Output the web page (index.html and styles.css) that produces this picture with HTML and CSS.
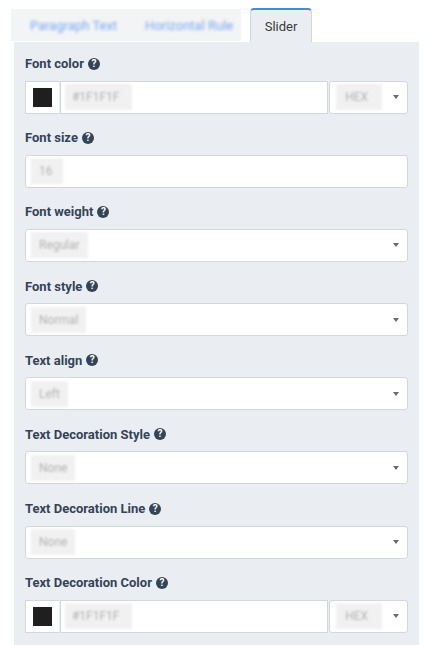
FILE: index.html
```html
<!DOCTYPE html>
<html>
<head>
<meta charset="utf-8">
<link rel="stylesheet" href="styles.css">
</head>
<body>
<div class="tabs">
  <div class="tab-group">
    <span class="tab-link">Paragraph Text</span>
    <span class="tab-link">Horizontal Rule</span>
  </div>
  <div class="tab-active">Slider</div>
</div>
<div class="panel">
  <div class="field">
    <div class="label">Font color <span class="q">?</span></div>
    <div class="color-row">
      <div class="swatch-cell"><span class="swatch"></span></div>
      <div class="text-input"><span class="ph ph-hex">#1F1F1F</span></div>
      <div class="select mode"><span class="ph ph-mode">HEX</span><span class="caret"></span></div>
    </div>
  </div>
  <div class="field">
    <div class="label">Font size <span class="q">?</span></div>
    <div class="input"><span class="ph ph-num">16</span></div>
  </div>
  <div class="field">
    <div class="label">Font weight <span class="q">?</span></div>
    <div class="select"><span class="ph">Regular</span><span class="caret"></span></div>
  </div>
  <div class="field">
    <div class="label">Font style <span class="q">?</span></div>
    <div class="select"><span class="ph">Normal</span><span class="caret"></span></div>
  </div>
  <div class="field">
    <div class="label">Text align <span class="q">?</span></div>
    <div class="select"><span class="ph">Left</span><span class="caret"></span></div>
  </div>
  <div class="field">
    <div class="label">Text Decoration Style <span class="q">?</span></div>
    <div class="select"><span class="ph">None</span><span class="caret"></span></div>
  </div>
  <div class="field">
    <div class="label">Text Decoration Line <span class="q">?</span></div>
    <div class="select"><span class="ph">None</span><span class="caret"></span></div>
  </div>
  <div class="field">
    <div class="label">Text Decoration Color <span class="q">?</span></div>
    <div class="color-row">
      <div class="swatch-cell"><span class="swatch"></span></div>
      <div class="text-input"><span class="ph ph-hex">#1F1F1F</span></div>
      <div class="select mode"><span class="ph ph-mode">HEX</span><span class="caret"></span></div>
    </div>
  </div>
</div>
</body>
</html>
```
FILE: styles.css
```css
* { box-sizing: border-box; }
html, body { margin: 0; padding: 0; background: #ffffff; }
body {
  font-family: Roboto, "Liberation Sans", Arial, sans-serif;
  font-size: 13px;
  color: #333;
  height: 645px;
  overflow: hidden;
}
.tabs {
  display: flex;
  align-items: flex-end;
  padding: 8px 0 0 11px;
}
.tab-group {
  display: flex;
  align-items: center;
  width: 230px;
  height: 32px;
  margin-bottom: 1px;
  background: #f3f4f5;
  padding-left: 19px;
  gap: 28px;
  overflow: hidden;
}
.tab-link {
  color: #7ba8ef;
  filter: blur(1.4px);
  font-size: 13px;
  white-space: nowrap;
}
.tab-active {
  margin-left: 9px;
  width: 62px;
  height: 34px;
  background: #eaeef3;
  border-top: 2px solid #3d8fd9;
  border-left: 1px solid #d3d8df;
  border-right: 1px solid #d3d8df;
  border-radius: 4px 4px 0 0;
  display: flex;
  align-items: center;
  justify-content: center;
  color: #3a3a3a;
  font-size: 13px;
}
.panel {
  margin-left: 14px;
  width: 405px;
  min-height: 610px;
  background: #eaeef3;
  padding: 12.5px 11px 0;
}
.field { margin-bottom: 15.2px; }
.label {
  display: flex;
  align-items: center;
  height: 18px;
  margin-bottom: 8px;
  font-weight: 700;
  font-size: 13px;
  color: #354357;
  gap: 4px;
}
.q {
  display: inline-flex;
  align-items: center;
  justify-content: center;
  width: 12px;
  height: 12px;
  border-radius: 50%;
  background: #354357;
  color: #fff;
  font-size: 10px;
  font-weight: 700;
  line-height: 1;
}
.color-row {
  display: flex;
  height: 33px;
  gap: 1px;
}
.swatch-cell {
  width: 34px;
  background: #fff;
  border: 1px solid #d3d7dd;
  border-right: none;
  display: flex;
  align-items: center;
  padding-left: 7px;
}
.swatch {
  width: 19px;
  height: 19px;
  background: #1f1f1f;
}
.text-input {
  width: 269px;
  background: #fff;
  border: 1px solid #d3d7dd;
  display: flex;
  align-items: center;
  padding-left: 4px;
}
.input, .select {
  height: 33px;
  background: #fff;
  border: 1px solid #d3d7dd;
  border-radius: 3px;
  display: flex;
  align-items: center;
  padding-left: 5px;
}
.select { padding-right: 8px; }
.select.mode { width: 79px; padding-left: 6px; }
.ph {
  display: inline-block;
  background: #f1f1f1;
  color: #b3b3b3;
  font-size: 12px;
  height: 26px;
  line-height: 26px;
  padding: 0 8px;
  filter: blur(1.1px);
}
.ph-hex { width: 67px; padding-left: 7px; }
.ph-mode { width: 46px; padding-left: 9px; }
.ph-num { width: 32px; }
.caret {
  margin-left: auto;
  width: 0;
  height: 0;
  border-left: 3.5px solid transparent;
  border-right: 3.5px solid transparent;
  border-top: 4px solid #6a6a6a;
}
```
